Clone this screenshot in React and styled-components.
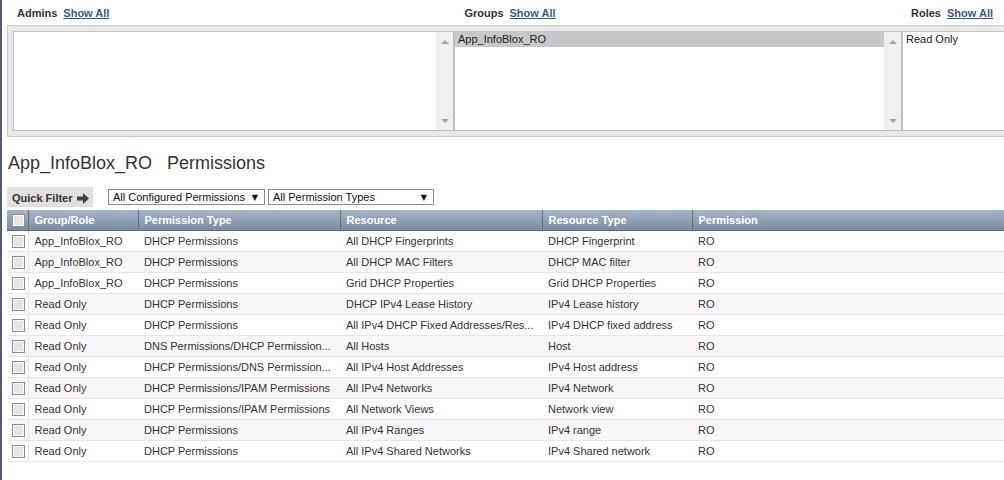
import React from 'react';
import styled, { createGlobalStyle } from 'styled-components';

const Global = createGlobalStyle`
  html, body {
    margin: 0;
    padding: 0;
    background: #fff;
    font-family: "Liberation Sans", Arial, sans-serif;
    color: #333;
  }
`;

const Page = styled.div`
  display: flex;
  width: 1004px;
  height: 480px;
  overflow: hidden;
`;

const Strip = styled.div`
  width: 2px;
  flex: none;
  background: #4e5d75;
`;

const Main = styled.div`
  flex: 1;
  min-width: 0;
  padding-left: 5px;
  overflow: hidden;
`;

const LabelRow = styled.div`
  display: grid;
  grid-template-columns: 1fr auto 1fr;
  align-items: center;
  height: 25px;
  padding: 0 11px 0 10px;
  font-size: 11px;
  font-weight: bold;
`;

const LabelCell = styled.div`
  display: flex;
  gap: 6px;
  justify-content: ${p => p.align || 'flex-start'};
  margin-left: ${p => p.shift || 0}px;
  color: #333;
`;

const ShowAll = styled.a`
  color: #3d5a7e;
  text-decoration: underline;
  cursor: pointer;
`;

const ListPanel = styled.div`
  display: flex;
  width: 1200px;
  height: 100px;
  padding: 5px;
  background: #e8e8e8;
  border: 1px solid #c8c8c8;
`;

const ListBox = styled.div`
  display: flex;
  box-sizing: border-box;
  width: ${p => p.w}px;
  flex: none;
  background: #fff;
  border: 1px solid #c0c0c0;
`;

const ListItems = styled.div`
  flex: 1;
  font-size: 11px;
  color: #222;
`;

const ListItem = styled.div`
  height: 15px;
  line-height: 15px;
  padding-left: 3px;
  background: ${p => (p.selected ? '#c8c8c8' : 'transparent')};
`;

const Scroll = styled.div`
  width: 17px;
  flex: none;
  background: #f0f0f0;
  display: flex;
  flex-direction: column;
  justify-content: space-between;
  align-items: center;
  padding: 8px 0 7px;
`;

const Arrow = styled.span`
  width: 0;
  height: 0;
  border-left: 4px solid transparent;
  border-right: 4px solid transparent;
  ${p => (p.down ? 'border-top: 4px solid #a8a8a8;' : 'border-bottom: 4px solid #a8a8a8;')}
`;

const Title = styled.h1`
  margin: 15px 0 0 1px;
  font-size: 18px;
  line-height: 22px;
  font-weight: normal;
  color: #333;
  display: flex;
  gap: 15px;
`;

const FilterRow = styled.div`
  display: flex;
  align-items: center;
  margin-top: 13px;
  height: 20px;
`;

const QuickFilter = styled.div`
  display: flex;
  align-items: center;
  gap: 4px;
  width: 86px;
  height: 20px;
  padding: 2px 0 0 5px;
  box-sizing: border-box;
  background: #e0e0e0;
  font-size: 11px;
  font-weight: bold;
  color: #333;
  margin-right: 15px;
`;

const Select = styled.div`
  display: flex;
  align-items: center;
  justify-content: space-between;
  width: ${p => p.w}px;
  height: 16px;
  box-sizing: border-box;
  margin-right: 3px;
  padding: 0 6px 0 4px;
  border: 1px solid #8c8c8c;
  background: #fff;
  font-size: 11px;
  color: #111;
`;

const Caret = styled.span`
  font-size: 8px;
  font-family: "DejaVu Sans", sans-serif;
  color: #111;
`;

const Table = styled.table`
  margin-top: 3px;
  width: 1000px;
  table-layout: fixed;
  border-collapse: collapse;
  font-size: 11px;
`;

const Th = styled.th`
  height: 20px;
  padding: 0 6px;
  text-align: left;
  color: #fff;
  font-weight: bold;
  background: linear-gradient(#a6b4c5, #7b8ca4);
  border-bottom: 1px solid #5a6a82;
  border-left: ${p => (p.first ? 'none' : '1px solid #5f6f88')};
  white-space: nowrap;
`;

const Tr = styled.tr`
  background: ${p => (p.alt ? '#f8f8f8' : '#fff')};
`;

const Td = styled.td`
  height: 20px;
  padding: 0 6px;
  color: #333;
  border-bottom: 1px solid #e6e6e6;
  border-right: ${p => (p.check ? '1px solid #e6e6e6' : 'none')};
  white-space: nowrap;
  overflow: hidden;
`;

const CheckCell = styled(Td)`
  padding: 0 0 0 5px;
`;

const HeadCheckCell = styled(Th)`
  padding: 0 0 0 5px;
`;

const Box = styled.span`
  display: block;
  width: 13px;
  height: 13px;
  box-sizing: border-box;
  border: 1px solid #8e8e8e;
  background: #e4e4e4;
  box-shadow: inset 1px 1px 0 #f8f8f8, inset -1px -1px 0 #f8f8f8;
`;

const rows = [
  ['App_InfoBlox_RO', 'DHCP Permissions', 'All DHCP Fingerprints', 'DHCP Fingerprint', 'RO'],
  ['App_InfoBlox_RO', 'DHCP Permissions', 'All DHCP MAC Filters', 'DHCP MAC filter', 'RO'],
  ['App_InfoBlox_RO', 'DHCP Permissions', 'Grid DHCP Properties', 'Grid DHCP Properties', 'RO'],
  ['Read Only', 'DHCP Permissions', 'DHCP IPv4 Lease History', 'IPv4 Lease history', 'RO'],
  ['Read Only', 'DHCP Permissions', 'All IPv4 DHCP Fixed Addresses/Res...', 'IPv4 DHCP fixed address', 'RO'],
  ['Read Only', 'DNS Permissions/DHCP Permission...', 'All Hosts', 'Host', 'RO'],
  ['Read Only', 'DHCP Permissions/DNS Permission...', 'All IPv4 Host Addresses', 'IPv4 Host address', 'RO'],
  ['Read Only', 'DHCP Permissions/IPAM Permissions', 'All IPv4 Networks', 'IPv4 Network', 'RO'],
  ['Read Only', 'DHCP Permissions/IPAM Permissions', 'All Network Views', 'Network view', 'RO'],
  ['Read Only', 'DHCP Permissions', 'All IPv4 Ranges', 'IPv4 range', 'RO'],
  ['Read Only', 'DHCP Permissions', 'All IPv4 Shared Networks', 'IPv4 Shared network', 'RO'],
];

const ScrollBar = () => (
  <Scroll>
    <Arrow />
    <Arrow down />
  </Scroll>
);

export default function App() {
  return (
    <Page>
      <Global />
      <Strip />
      <Main>
        <LabelRow>
          <LabelCell>Admins <ShowAll>Show All</ShowAll></LabelCell>
          <LabelCell align="center" shift={10}>Groups <ShowAll>Show All</ShowAll></LabelCell>
          <LabelCell align="flex-end">Roles <ShowAll>Show All</ShowAll></LabelCell>
        </LabelRow>

        <ListPanel>
          <ListBox w={441}>
            <ListItems />
            <ScrollBar />
          </ListBox>
          <ListBox w={448}>
            <ListItems>
              <ListItem selected>App_InfoBlox_RO</ListItem>
            </ListItems>
            <ScrollBar />
          </ListBox>
          <ListBox w={300}>
            <ListItems>
              <ListItem>Read Only</ListItem>
            </ListItems>
          </ListBox>
        </ListPanel>

        <Title>
          <span>App_InfoBlox_RO</span>
          <span>Permissions</span>
        </Title>

        <FilterRow>
          <QuickFilter>
            Quick Filter
            <svg width="12" height="11" viewBox="0 0 12 11">
              <path d="M0 3.5h6V0l6 5.5-6 5.5V7.5H0z" fill="#444" />
            </svg>
          </QuickFilter>
          <Select w={157}>All Configured Permissions <Caret>▼</Caret></Select>
          <Select w={166}>All Permission Types <Caret>▼</Caret></Select>
        </FilterRow>

        <Table>
          <colgroup>
            <col style={{ width: 21 }} />
            <col style={{ width: 110 }} />
            <col style={{ width: 202 }} />
            <col style={{ width: 202 }} />
            <col style={{ width: 150 }} />
            <col />
          </colgroup>
          <thead>
            <tr>
              <HeadCheckCell first><Box /></HeadCheckCell>
              <Th>Group/Role</Th>
              <Th>Permission Type</Th>
              <Th>Resource</Th>
              <Th>Resource Type</Th>
              <Th>Permission</Th>
            </tr>
          </thead>
          <tbody>
            {rows.map((r, i) => (
              <Tr key={i} alt={i % 2 === 1}>
                <CheckCell check><Box /></CheckCell>
                {r.map((c, j) => (
                  <Td key={j}>{c}</Td>
                ))}
              </Tr>
            ))}
          </tbody>
        </Table>
      </Main>
    </Page>
  );
}
